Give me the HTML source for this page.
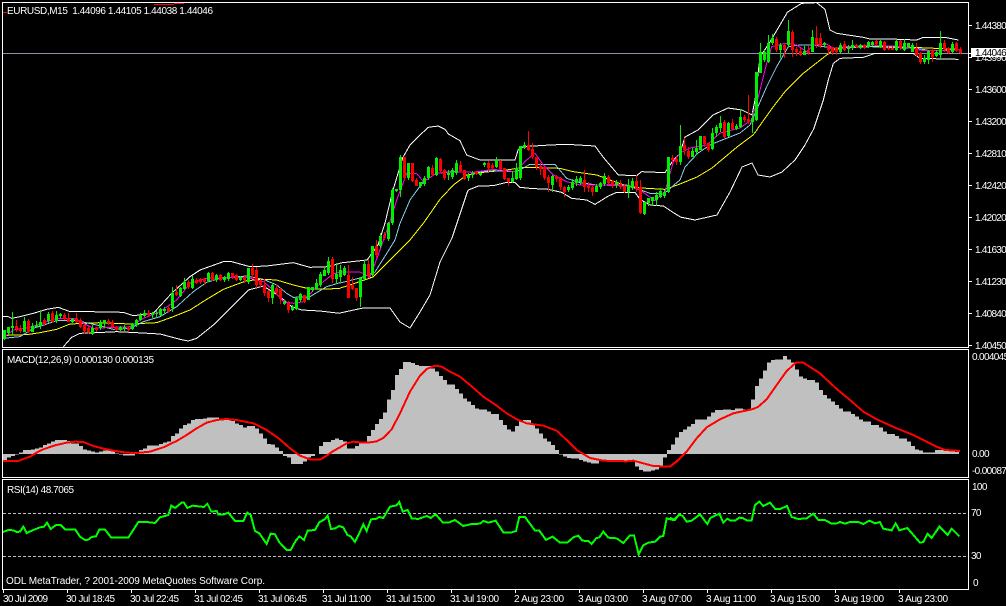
<!DOCTYPE html>
<html><head><meta charset="utf-8"><title>EURUSD,M15</title>
<style>
html,body{margin:0;padding:0;background:#000;width:1006px;height:606px;overflow:hidden}
svg{display:block}
text{font-family:"Liberation Sans",sans-serif;font-size:10px;fill:#fff}
.a{letter-spacing:-.75px}
.b{letter-spacing:-.65px}
.l{fill:none;shape-rendering:crispEdges}
.c{fill:none;shape-rendering:crispEdges}
</style></head><body>
<svg width="1006" height="606" viewBox="0 0 1006 606" xmlns="http://www.w3.org/2000/svg">
<rect width="1006" height="606" fill="#000"/>
<path d="M3 53.5H968" stroke="#8a96a8" fill="none" shape-rendering="crispEdges"/>
<clipPath id="m"><rect x="3" y="3" width="965" height="344"/></clipPath>
<clipPath id="d"><rect x="3" y="350" width="965" height="127"/></clipPath>
<clipPath id="r"><rect x="3" y="480" width="965" height="109"/></clipPath>
<g clip-path="url(#m)">
<!-- Band / MA lines: left -->
<g transform="translate(0 250) scale(.33333)" stroke-width="3">
<polyline class="l" stroke="#fff" points="9,200 25,200 35,205 60,200 100,190 140,178 175,172 210,185 270,185 370,187 400,197 460,190 515,130 570,80 600,60 670,35 695,35 750,50 800,48 880,38 930,52 985,50 1020,40"/>
<polyline class="l" stroke="#fff" points="190,290 215,262 240,250 290,248 350,245 410,248 480,252 540,268 565,273 590,265 640,225 700,165 745,120 790,108 840,140 875,170 905,180 960,183 1020,190"/>
<polyline class="l" stroke="#ff0" points="9,258 30,255 80,254 120,248 170,238 210,222 300,218 390,222 470,218 520,200 570,180 620,148 670,118 740,92 790,88 830,90 880,105 930,117 1020,116"/>
<polyline class="l" stroke="#87ceeb" points="9,265 60,260 100,235 140,222 170,212 230,212 290,225 340,238 390,235 430,215 480,200 530,170 580,125 620,97 660,85 740,78 790,88 830,105 860,130 880,142 930,140 980,110 1020,98"/>
<polyline class="l" stroke="#f0f" points="9,265 40,240 90,232 120,222 170,205 220,205 280,235 340,232 390,230 430,205 480,185 530,150 570,100 620,85 700,82 740,82 790,95 820,120 850,155 880,160 910,155 950,110 1000,72 1020,66"/>
</g>
<!-- connectors -->
<g stroke-width="1">
<polyline class="l" stroke="#fff" points="340,263 367,260 378,245 385,223 393,190 403,157"/>
<polyline class="l" stroke="#fff" points="340,313 363,308 390,308 400,322 410,328 420,312 430,295 440,262 452,238 467,193"/>
<polyline class="l" stroke="#ff0" points="340,288 347,286 373,277 393,257 410,240"/>
<polyline class="l" stroke="#87ceeb" points="340,283 360,278 375,272 387,253 395,240"/>
<polyline class="l" stroke="#f0f" points="340,272 360,272 370,277 380,250 388,227"/>
<polyline class="l" stroke="#fff" points="680,153 685,137 698,130 713,115 728,108 742,110 752,115 755,100 760,57 770,42 787,13"/>
<polyline class="l" stroke="#fff" points="680,217 695,220 717,215 730,192 742,167 752,163 758,175 770,177 782,172 795,160 805,145 813,130"/>
<polyline class="l" stroke="#ff0" points="680,184 697,177 712,168 737,147 753,135 757,130"/>
<polyline class="l" stroke="#87ceeb" points="680,180 685,167 698,153 712,144 740,133 750,125"/>
<polyline class="l" stroke="#f0f" points="680,153 690,148 707,145 720,133 740,128 742,127"/>
</g>
<!-- middle -->
<g transform="translate(340 110) scale(.33333)" stroke-width="3">
<polyline class="l" stroke="#fff" points="190,140 210,105 240,75 265,52 295,48 315,58 325,72 360,92 380,135 420,150 525,150 535,118 550,110 630,105 680,103 765,108 790,142 835,195 890,197 905,185 975,188 1000,150 1020,130"/>
<polyline class="l" stroke="#fff" points="380,250 385,240 415,228 460,227 500,217 525,218 540,232 580,236 620,237 665,247 695,265 740,270 765,283 805,258 830,247 885,247 900,268 930,285 970,288 1000,308 1020,320"/>
<polyline class="l" stroke="#ff0" points="210,390 250,340 300,268 340,225 380,195 430,187 500,180 550,172 660,175 700,185 770,195 810,210 860,228 920,235 975,238 1020,222"/>
<polyline class="l" stroke="#87ceeb" points="165,390 180,340 210,270 250,215 290,190 340,185 400,187 460,182 530,185 570,163 645,163 680,205 720,218 770,225 860,225 930,250 970,252 1020,210"/>
<polyline class="l" stroke="#f0f" points="145,350 170,270 200,190 230,190 250,215 290,190 330,185 400,187 460,178 525,185 560,150 585,130 610,165 640,195 680,215 720,225 780,225 860,228 900,240 945,272 975,245 1000,155 1020,130"/>
</g>
<!-- right -->
<g transform="translate(670 0) scale(.33333)" stroke-width="3">
<polyline class="l" stroke="#fff" points="350,38 395,10 440,8 465,28 480,90 500,100 580,112 600,117 660,117 740,120 760,112 830,113 865,120"/>
<polyline class="l" stroke="#fff" points="430,390 460,300 475,240 490,190 510,175 580,172 615,160 730,160 750,175 865,178"/>
<polyline class="l" stroke="#ff0" points="260,390 310,320 345,275 400,220 470,165 490,150 540,140 640,140 750,143 865,148"/>
<polyline class="l" stroke="#87ceeb" points="240,375 290,260 320,200 355,140 390,135 430,135 490,145 600,140 740,145 780,152 865,150"/>
<polyline class="l" stroke="#f0f" points="215,380 245,360 265,290 290,190 305,140 345,130 380,135 410,155 430,135 470,132 490,145 530,140 600,135 700,140 745,150 770,152 865,150"/>
</g>
<!-- green wicks -->
<path class="c" stroke="#00f000" stroke-width="1" d="M4.5 330V340M8.5 327V335M12.5 312V335M24.5 317V332M32.5 323V332M36.5 321V328M40.5 311V329M48.5 312V323M56.5 311V323M60.5 313V318M72.5 318V323M92.5 325V335M100.5 320V330M104.5 320V328M120.5 326V331M124.5 325V331M132.5 323V330M136.5 319V327M140.5 313V321M144.5 310V317M152.5 312V318M156.5 311V317M160.5 308V316M164.5 307V313M172.5 287V312M180.5 287V297M184.5 278V290M192.5 276V289M208.5 272V282M216.5 274V282M224.5 276V282M228.5 272V281M240.5 276V281M248.5 268V284M272.5 283V304M284.5 300V305M292.5 305V311M296.5 297V310M300.5 293V302M308.5 287V300M312.5 287V292M316.5 279V290M320.5 272V287M324.5 268V276M328.5 257V275M336.5 263V283M340.5 265V282M344.5 266V276M360.5 277V307M364.5 260V281M372.5 246V277M380.5 233V248M388.5 222V241M392.5 188V225M396.5 189V192M400.5 155V197M408.5 163V180M420.5 182V188M424.5 176V186M428.5 166V180M436.5 157V176M448.5 170V180M452.5 168V179M456.5 160V175M468.5 173V181M472.5 171V178M480.5 172V176M484.5 162V167M496.5 157V168M512.5 171V183M516.5 163V180M520.5 146V180M524.5 142V149M552.5 175V192M568.5 185V192M572.5 179V190M576.5 176V186M580.5 176V185M596.5 184V192M600.5 182V189M604.5 173V186M616.5 180V188M628.5 179V198M632.5 178V190M644.5 202V215M648.5 198V206M652.5 197V206M656.5 192V206M660.5 188V198M664.5 190V198M668.5 157V193M680.5 125V165M692.5 148V157M696.5 140V155M700.5 136V150M712.5 128V150M716.5 125V137M720.5 116V132M728.5 122V137M736.5 124V130M740.5 109V128M752.5 112V133M756.5 72V121M760.5 43V73M764.5 50V62M768.5 35V63M772.5 34V45M780.5 43V58M788.5 20V47M804.5 46V55M812.5 30V52M824.5 42V47M840.5 43V53M848.5 45V53M852.5 40V50M860.5 44V49M868.5 41V48M872.5 41V46M880.5 40V48M896.5 40V51M904.5 39V51M908.5 43V48M912.5 43V52M924.5 55V64M928.5 50V64M936.5 50V57M940.5 31V59M952.5 42V53"/>
<!-- green bodies -->
<path class="c" stroke="#00f000" stroke-width="3" d="M4.5 330V339M8.5 327V333M12.5 326V328M24.5 321V332M32.5 326V332M36.5 325V327M40.5 322V326M48.5 314V321M56.5 315V321M60.5 314V316M72.5 319V322M92.5 328V334M100.5 322V328M104.5 320V323M120.5 327V330M124.5 327V329M132.5 324V329M136.5 320V325M140.5 315V320M144.5 313V316M152.5 313V315M156.5 313V314M160.5 309V315M164.5 309V311M172.5 293V308M180.5 288V296M184.5 282V289M192.5 279V288M208.5 273V281M216.5 275V280M224.5 277V280M228.5 273V279M240.5 277V280M248.5 268V282M272.5 285V298M284.5 302V304M292.5 307V310M296.5 298V309M300.5 294V300M308.5 287V300M312.5 287V290M316.5 283V289M320.5 274V285M324.5 270V276M328.5 261V273M336.5 274V279M340.5 270V277M344.5 268V275M360.5 278V297M364.5 264V279M372.5 246V275M380.5 236V246M388.5 223V239M392.5 190V223M396.5 189V191M400.5 157V190M408.5 163V178M420.5 182V186M424.5 178V184M428.5 167V178M436.5 158V175M448.5 173V175M452.5 170V177M456.5 163V173M468.5 175V178M472.5 173V175M480.5 173V175M484.5 163V165M496.5 160V167M512.5 178V182M516.5 168V179M520.5 146V178M524.5 145V148M552.5 176V185M568.5 187V190M572.5 182V188M576.5 179V183M580.5 178V182M596.5 186V192M600.5 183V187M604.5 176V184M616.5 183V185M628.5 185V192M632.5 181V188M644.5 202V214M648.5 198V203M652.5 197V201M656.5 195V200M660.5 191V197M664.5 192V196M668.5 157V192M680.5 146V162M692.5 151V157M696.5 148V152M700.5 136V150M712.5 133V149M716.5 127V133M720.5 123V128M728.5 123V136M736.5 126V129M740.5 117V127M752.5 118V122M756.5 72V120M760.5 52V73M764.5 52V60M768.5 43V62M772.5 38V43M780.5 45V50M788.5 31V45M804.5 51V55M812.5 37V52M824.5 43V45M840.5 45V52M848.5 47V49M852.5 45V48M860.5 45V48M868.5 42V47M872.5 42V45M880.5 41V47M896.5 41V50M904.5 43V50M908.5 43V47M912.5 45V52M924.5 58V62M928.5 51V60M936.5 52V56M940.5 43V55M952.5 44V52"/>
<!-- red wicks -->
<path class="c" stroke="#f00" stroke-width="1" d="M16.5 320V332M20.5 325V333M28.5 319V333M44.5 318V326M52.5 311V323M64.5 313V320M68.5 313V322M76.5 313V323M80.5 318V328M84.5 323V334M88.5 326V334M96.5 327V332M108.5 319V325M112.5 320V328M116.5 326V331M128.5 326V331M148.5 310V317M168.5 306V312M176.5 285V296M188.5 280V289M196.5 278V284M200.5 278V284M204.5 278V285M212.5 272V281M220.5 274V281M232.5 273V279M236.5 274V281M244.5 275V283M252.5 264V279M256.5 267V288M260.5 279V287M264.5 279V296M268.5 290V302M276.5 284V295M280.5 288V304M288.5 301V313M304.5 295V303M332.5 257V283M348.5 265V298M352.5 277V290M356.5 288V301M368.5 259V278M376.5 240V258M384.5 232V240M404.5 157V181M412.5 163V182M416.5 178V186M432.5 165V176M440.5 158V173M444.5 169V180M460.5 161V172M464.5 170V180M476.5 171V175M488.5 161V172M492.5 163V170M500.5 160V170M504.5 168V180M508.5 178V186M528.5 131V151M532.5 143V159M536.5 157V170M540.5 163V175M544.5 167V180M548.5 175V192M556.5 175V182M560.5 177V190M564.5 186V197M584.5 170V192M588.5 182V192M592.5 186V196M608.5 175V185M612.5 180V188M620.5 180V189M624.5 184V193M636.5 175V192M640.5 180V214M672.5 155V164M676.5 156V165M684.5 138V155M688.5 147V159M704.5 136V147M708.5 143V152M724.5 120V138M732.5 119V130M744.5 115V122M748.5 95V124M776.5 37V52M784.5 43V58M792.5 30V57M796.5 47V56M800.5 48V56M808.5 46V55M816.5 26V48M820.5 33V48M828.5 45V55M832.5 47V55M836.5 47V55M844.5 41V51M856.5 44V48M864.5 44V49M876.5 40V46M884.5 41V51M888.5 46V50M892.5 46V50M900.5 40V50M916.5 43V56M920.5 52V64M932.5 49V62M944.5 40V52M948.5 47V54M956.5 42V52M960.5 47V54"/>
<!-- red bodies -->
<path class="c" stroke="#f00" stroke-width="3" d="M16.5 326V329M20.5 328V331M28.5 321V332M44.5 320V324M52.5 313V322M64.5 315V319M68.5 318V322M76.5 318V322M80.5 320V327M84.5 325V331M88.5 328V332M96.5 328V330M108.5 321V323M112.5 322V327M116.5 327V330M128.5 328V330M148.5 313V315M168.5 308V311M176.5 292V295M188.5 282V287M196.5 280V283M200.5 279V282M204.5 279V282M212.5 273V280M220.5 275V280M232.5 273V277M236.5 275V280M244.5 277V280M252.5 268V275M256.5 270V285M260.5 280V285M264.5 285V293M268.5 291V298M276.5 288V293M280.5 289V299M288.5 303V310M304.5 295V302M332.5 259V279M348.5 275V298M352.5 285V289M356.5 288V298M368.5 264V276M376.5 246V255M384.5 235V238M404.5 157V178M412.5 163V181M416.5 180V186M432.5 168V175M440.5 159V171M444.5 170V178M460.5 165V171M464.5 170V179M476.5 172V174M488.5 163V168M492.5 165V168M500.5 161V169M504.5 168V179M508.5 178V182M528.5 145V150M532.5 149V157M536.5 157V167M540.5 166V169M544.5 167V178M548.5 177V183M556.5 176V179M560.5 178V187M564.5 187V192M584.5 180V187M588.5 186V188M592.5 187V192M608.5 177V183M612.5 181V185M620.5 184V187M624.5 186V192M636.5 181V189M640.5 187V213M672.5 158V160M676.5 159V162M684.5 145V150M688.5 151V157M704.5 136V144M708.5 143V150M724.5 122V137M732.5 123V129M744.5 117V120M748.5 119V122M776.5 39V50M784.5 45V50M792.5 32V50M796.5 49V52M800.5 51V55M808.5 51V53M816.5 38V44M820.5 38V46M828.5 46V50M832.5 47V52M836.5 48V52M844.5 44V50M856.5 45V47M864.5 45V48M876.5 41V44M884.5 42V50M888.5 48V49M892.5 48V50M900.5 41V48M916.5 48V55M920.5 53V62M932.5 50V57M944.5 43V49M948.5 48V53M956.5 43V50M960.5 49V53"/>
<path class="l" stroke="#f00" d="M3 12.5H7M154 4.5H174M174 3.5H184"/>
</g>
<!-- MACD -->
<g clip-path="url(#d)">
<path transform="matrix(1 0 0 .33333 0 340)" fill="#c0c0c0" shape-rendering="crispEdges" d="M3 342V360h4V352h4V348h4V344h4V338h4V330h4V330h4V328h4V325h4V322h4V315h4V310h4V305h4V300h4V300h4V300h4V303h4V310h4V310h4V318h4V328h4V332h4V335h4V337h4V334h4V332h4V332h4V335h4V340h4V344h4V346h4V346h4V346h4V340h4V330h4V325h4V317h4V317h4V317h4V312h4V307h4V304h4V288h4V280h4V265h4V255h4V250h4V240h4V237h4V237h4V235h4V232h4V232h4V232h4V236h4V236h4V240h4V243h4V250h4V255h4V262h4V258h4V258h4V265h4V280h4V295h4V312h4V314h4V322h4V333h4V348h4V352h4V372h4V372h4V372h4V364h4V352h4V348h4V342h4V318h4V306h4V306h4V300h4V295h4V300h4V305h4V325h4V325h4V318h4V310h4V310h4V288h4V270h4V252h4V237h4V218h4V178h4V150h4V105h4V87h4V66h4V66h4V69h4V75h4V78h4V78h4V78h4V85h4V95h4V108h4V120h4V133h4V133h4V147h4V160h4V175h4V185h4V195h4V205h4V208h4V208h4V215h4V222h4V222h4V240h4V255h4V268h4V275h4V258h4V242h4V240h4V240h4V250h4V265h4V280h4V296h4V305h4V315h4V330h4V344h4V350h4V354h4V356h4V356h4V360h4V365h4V368h4V370h4V370h4V362h4V362h4V362h4V362h4V362h4V362h4V362h4V362h4V365h4V380h4V390h4V395h4V395h4V392h4V388h4V382h4V352h4V330h4V313h4V292h4V276h4V268h4V260h4V252h4V238h4V238h4V238h4V230h4V218h4V210h4V210h4V208h4V208h4V210h4V205h4V205h4V208h4V208h4V178h4V138h4V115h4V92h4V67h4V60h4V58h4V58h4V48h4V58h4V68h4V88h4V110h4V115h4V120h4V120h4V128h4V150h4V165h4V175h4V185h4V195h4V205h4V215h4V215h4V222h4V230h4V238h4V245h4V245h4V255h4V255h4V262h4V275h4V282h4V282h4V288h4V295h4V295h4V305h4V318h4V328h4V332h4V337h4V337h4V337h4V330h4V330h4V332h4V332h4V332h4V336h4V342z"/>
<g transform="translate(0 340) scale(.33333)" stroke-width="6">
<polyline class="l" stroke="#f00" points="9,363 55,363 70,357 90,350 110,338 130,328 165,316 200,308 225,305 250,306 280,318 310,326 345,333 380,338 410,339 450,335 490,322 530,303 560,285 590,265 620,248 650,240 680,237 710,240 760,250 800,270 840,298 870,325 900,347 930,358 960,359 980,347 1000,333 1020,322"/>
</g>
<g transform="translate(340 340) scale(.33333)" stroke-width="6">
<polyline class="l" stroke="#f00" points="0,322 20,310 40,305 60,307 90,307 110,304 130,294 155,268 180,220 210,155 240,107 260,87 285,77 305,80 330,95 360,110 390,135 430,170 470,197 500,220 530,238 560,250 610,257 650,272 680,300 710,330 750,354 790,362 860,364 880,362 940,378 990,380 1020,355"/>
</g>
<g transform="translate(670 340) scale(.33333)" stroke-width="6">
<polyline class="l" stroke="#f00" points="0,380 20,365 50,335 80,295 110,262 150,238 190,220 250,207 265,200 290,178 320,135 350,93 378,68 400,68 450,100 500,147 540,180 580,215 620,238 680,265 730,285 800,320 825,330 870,333"/>
</g>
</g>
<!-- RSI -->
<path d="M3 513.5H968M3 556.5H968" stroke="#c0c0c0" stroke-dasharray="3 2" fill="none" shape-rendering="crispEdges"/>
<g clip-path="url(#r)">
<g transform="translate(0 470) scale(.33333)" stroke-width="6">
<polyline class="l" stroke="#0f0" points="9,186 25,180 40,181 50,186 60,185 70,170 80,189 100,180 120,172 132,170 141,158 152,177 168,165 182,165 196,179 226,179 240,200 255,210 265,209 275,201 288,199 298,179 315,179 334,203 385,203 415,156 440,156 465,159 480,142 505,135 514,107 525,114 545,98 552,98 562,114 578,107 612,111 622,101 634,125 650,123 655,133 672,133 685,128 705,153 730,153 742,128 752,135 765,183 778,190 800,222 812,191 825,193 838,217 860,240 872,240 888,211 898,199 912,210 923,182 945,180 958,157 975,147 983,137 993,177 1005,175 1020,167"/>
</g>
<g transform="translate(340 470) scale(.33333)" stroke-width="6">
<polyline class="l" stroke="#0f0" points="0,169 10,172 22,195 32,199 45,216 60,185 70,163 80,183 93,148 107,147 118,141 130,144 150,110 170,106 178,96 188,125 203,120 215,145 235,147 260,138 272,144 287,133 308,157 328,157 345,150 370,168 395,162 420,161 430,153 445,158 467,152 490,187 515,187 528,183 538,141 555,141 585,182 598,182 618,210 638,200 660,218 682,218 700,202 715,197 727,212 745,213 755,222 768,205 778,202 790,185 805,203 830,205 850,219 870,196 882,196 896,253 910,226 925,218 945,215 960,200 970,198 980,145 1000,150 1020,133"/>
</g>
<g transform="translate(670 470) scale(.33333)" stroke-width="6">
<polyline class="l" stroke="#0f0" points="0,143 15,150 27,133 38,138 50,155 65,152 90,133 112,162 122,143 148,131 160,158 172,146 182,152 195,152 208,143 218,144 230,151 245,151 255,105 268,95 280,108 300,98 316,117 330,117 351,108 365,141 385,147 410,145 430,131 445,150 465,150 485,161 498,161 510,156 525,161 540,156 565,156 580,162 598,152 615,160 630,156 640,176 665,181 677,160 688,181 712,174 750,218 760,216 773,191 785,204 808,170 833,195 845,176 868,199"/>
</g>
</g>
<!-- frames -->
<g fill="none" stroke="#fff" shape-rendering="crispEdges">
<rect x="2.5" y="2.5" width="966" height="345"/>
<rect x="2.5" y="349.5" width="966" height="128"/>
<rect x="2.5" y="479.5" width="966" height="110"/>
<path d="M969 25.5h3M969 53.5h3M969 57.5h3M969 89.5h3M969 121.5h3M969 153.5h3M969 185.5h3M969 217.5h3M969 249.5h3M969 281.5h3M969 313.5h3M969 345.5h3"/>
<path d="M3.5 590v3M67.5 590v3M131.5 590v3M195.5 590v3M259.5 590v3M323.5 590v3M387.5 590v3M451.5 590v3M515.5 590v3M579.5 590v3M643.5 590v3M707.5 590v3M771.5 590v3M835.5 590v3M899.5 590v3"/>
</g>
<!-- texts -->
<text x="7" y="14" xml:space="preserve" textLength="206">EURUSD,M15  1.44096 1.44105 1.44038 1.44046</text>
<text x="7" y="363" textLength="147">MACD(12,26,9) 0.000130 0.000135</text>
<text x="7" y="493" textLength="67">RSI(14) 48.7065</text>
<text x="6" y="584" textLength="259">ODL MetaTrader, ? 2001-2009 MetaQuotes Software Corp.</text>
<g class="a">
<text x="975" y="29">1.44380</text>
<text x="975" y="61">1.43990</text>
<rect x="971" y="48" width="35" height="9" fill="#fff"/>
<text x="975" y="56" style="fill:#000">1.44046</text>
<text x="975" y="93">1.43600</text>
<text x="975" y="125">1.43200</text>
<text x="975" y="157">1.42810</text>
<text x="975" y="189">1.42420</text>
<text x="975" y="221">1.42020</text>
<text x="975" y="253">1.41630</text>
<text x="975" y="285">1.41230</text>
<text x="975" y="317">1.40840</text>
<text x="975" y="349">1.40450</text>
</g>
<g class="b">
<text x="972" y="360">0.004045</text>
<text x="972" y="457">0.00</text>
<text x="972" y="474">-0.00087</text>
<text x="972" y="490">100</text>
<text x="971" y="516">70</text>
<text x="971" y="559">30</text>
<text x="973" y="586">0</text>
</g>
<text x="3" y="602" textLength="45">30 Jul 2009</text>
<text x="66" y="602" textLength="49">30 Jul 18:45</text>
<text x="130" y="602" textLength="49">30 Jul 22:45</text>
<text x="194" y="602" textLength="49">31 Jul 02:45</text>
<text x="258" y="602" textLength="49">31 Jul 06:45</text>
<text x="322" y="602" textLength="49">31 Jul 11:00</text>
<text x="386" y="602" textLength="49">31 Jul 15:00</text>
<text x="450" y="602" textLength="49">31 Jul 19:00</text>
<text x="514" y="602" textLength="50">2 Aug 23:00</text>
<text x="578" y="602" textLength="50">3 Aug 03:00</text>
<text x="642" y="602" textLength="50">3 Aug 07:00</text>
<text x="706" y="602" textLength="50">3 Aug 11:00</text>
<text x="770" y="602" textLength="50">3 Aug 15:00</text>
<text x="834" y="602" textLength="50">3 Aug 19:00</text>
<text x="898" y="602" textLength="50">3 Aug 23:00</text>
</svg>
</body></html>
